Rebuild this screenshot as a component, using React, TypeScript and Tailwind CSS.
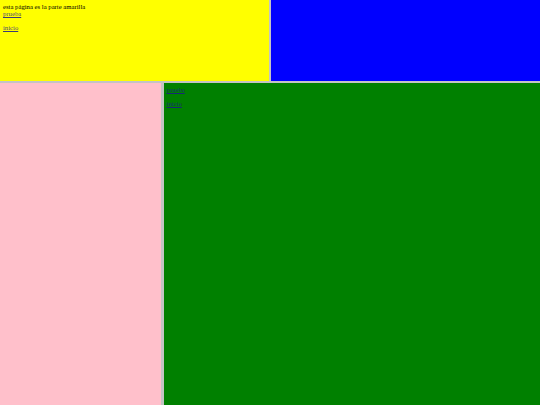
const serif = { fontFamily: '"Liberation Serif", "Times New Roman", serif' };

function FrameLinks({ intro }: { intro?: string }) {
  return (
    <div className="px-[3px] pt-[3px] text-[6.7px] leading-[7.2px] text-black" style={serif}>
      {intro && <div>{intro}</div>}
      <div>
        <a href="#" className="text-[#1a1a8a]/85 underline">
          prueba
        </a>
      </div>
      <div className="mt-[6.8px]">
        <a href="#" className="text-[#1a1a8a]/85 underline">
          inicio
        </a>
      </div>
    </div>
  );
}

export default function App() {
  return (
    <div className="flex h-[405px] w-[540px] flex-col overflow-hidden bg-[#c4c4c4]">
      <div className="flex h-[80.5px] shrink-0">
        <div className="w-[268.9px] shrink-0 bg-[#ffff00]">
          <FrameLinks intro="esta página es la parte amarilla" />
        </div>
        <div className="w-[2.25px] shrink-0 bg-[#c4c4c4]" />
        <div className="flex-1 bg-[#0000ff]" />
      </div>
      <div className="h-[2.25px] shrink-0 bg-[#c4c4c4]" />
      <div className="flex flex-1">
        <div className="w-[161.3px] shrink-0 bg-[#ffc0cb]" />
        <div className="w-[2.25px] shrink-0 bg-[#c4c4c4]" />
        <div className="flex-1 bg-[#008000]">
          <div className="pt-[0.5px]">
            <FrameLinks />
          </div>
        </div>
      </div>
    </div>
  );
}
